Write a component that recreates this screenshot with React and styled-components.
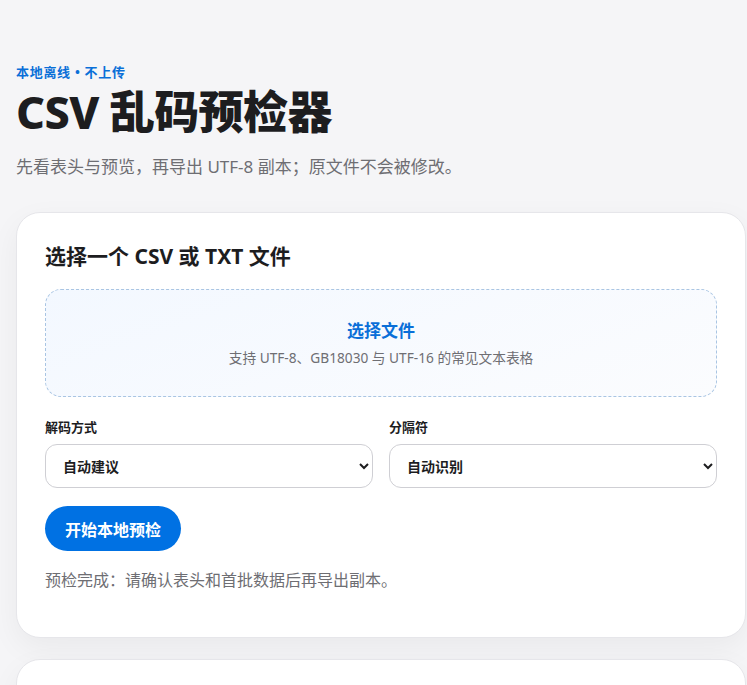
import styled, { createGlobalStyle } from "styled-components";

const GlobalStyle = createGlobalStyle`
  * { box-sizing: border-box; }
  body {
    margin: 0;
    background: #f5f5f7;
    font-family: "Noto Sans", "Noto Sans CJK SC", sans-serif;
    color: #1d1d1f;
  }
`;

const Page = styled.main`
  padding: 63px 1px 40px 16px;
`;

const Eyebrow = styled.div`
  font-size: 13px;
  font-weight: 700;
  color: #0a6fd8;
  line-height: 18px;
  letter-spacing: 0.7px;
`;

const Title = styled.h1`
  margin: 3px 0 0;
  font-size: 45px;
  line-height: 56px;
  font-weight: 800;
  letter-spacing: -0.6px;
  color: #1d1d1f;
`;

const Subtitle = styled.p`
  margin: 14px 0 0;
  font-size: 17px;
  line-height: 26px;
  color: #6e6e73;
`;

const Card = styled.section`
  margin-top: ${({ $mt }) => $mt || 0}px;
  background: #fff;
  border: 1px solid #e6e6ea;
  border-radius: 24px;
  padding: 28px 28px 46px;
  box-shadow: 0 10px 30px rgba(0, 0, 0, 0.05);
  min-height: ${({ $minH }) => $minH || 0}px;
`;

const CardTitle = styled.h2`
  margin: 0;
  font-size: 21px;
  line-height: 30px;
  font-weight: 700;
`;

const DropZone = styled.label`
  margin-top: 18px;
  display: flex;
  flex-direction: column;
  align-items: center;
  justify-content: center;
  height: 108px;
  border: 1px dashed #a9c5e3;
  border-radius: 16px;
  background: linear-gradient(160deg, #f3f8ff 0%, #fbfcfe 100%);
  cursor: pointer;
`;

const DropTitle = styled.span`
  font-size: 17px;
  font-weight: 700;
  color: #0a6fd8;
  line-height: 24px;
`;

const DropHint = styled.span`
  margin-top: 6px;
  font-size: 13.7px;
  color: #6e6e73;
  line-height: 18px;
`;

const Fields = styled.div`
  margin-top: 20px;
  display: grid;
  grid-template-columns: 1fr 1fr;
  gap: 16px;
`;

const Field = styled.div`
  display: flex;
  flex-direction: column;
  gap: 7px;
`;

const Label = styled.label`
  font-size: 13px;
  font-weight: 700;
  line-height: 20px;
  color: #1d1d1f;
`;

const Select = styled.select`
  height: 44px;
  padding: 0 10px 0 13px;
  border: 1px solid #cfcfd4;
  border-radius: 12px;
  background: #fff;
  font-family: inherit;
  font-size: 14px;
  font-weight: 600;
  color: #1d1d1f;
`;

const Button = styled.button`
  margin-top: 18px;
  height: 45px;
  padding: 0 20px;
  border: none;
  border-radius: 999px;
  background: #0071e3;
  color: #fff;
  font-family: inherit;
  font-size: 16px;
  font-weight: 700;
  cursor: pointer;
`;

const Status = styled.p`
  margin: 18px 0 0;
  font-size: 16px;
  line-height: 22px;
  color: #6e6e73;
`;

export default function App() {
  return (
    <>
      <GlobalStyle />
      <Page>
        <Eyebrow>本地离线 • 不上传</Eyebrow>
        <Title>CSV 乱码预检器</Title>
        <Subtitle>先看表头与预览，再导出 UTF-8 副本；原文件不会被修改。</Subtitle>

        <Card $mt={32}>
          <CardTitle>选择一个 CSV 或 TXT 文件</CardTitle>
          <DropZone>
            <DropTitle>选择文件</DropTitle>
            <DropHint>支持 UTF-8、GB18030 与 UTF-16 的常见文本表格</DropHint>
          </DropZone>
          <Fields>
            <Field>
              <Label>解码方式</Label>
              <Select defaultValue="auto">
                <option value="auto">自动建议</option>
                <option value="utf8">UTF-8</option>
                <option value="gb18030">GB18030</option>
                <option value="utf16">UTF-16</option>
              </Select>
            </Field>
            <Field>
              <Label>分隔符</Label>
              <Select defaultValue="auto">
                <option value="auto">自动识别</option>
                <option value=",">逗号</option>
                <option value=";">分号</option>
                <option value="tab">制表符</option>
              </Select>
            </Field>
          </Fields>
          <Button>开始本地预检</Button>
          <Status>预检完成：请确认表头和首批数据后再导出副本。</Status>
        </Card>

        <Card $mt={21} $minH={200} />
      </Page>
    </>
  );
}
